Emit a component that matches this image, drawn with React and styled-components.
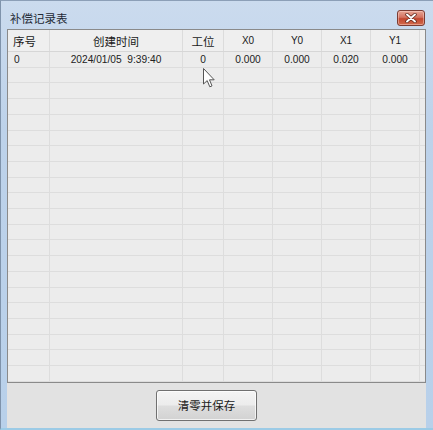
import React from 'react'
import styled, { createGlobalStyle } from 'styled-components'

const GlobalStyle = createGlobalStyle`
  html, body {
    margin: 0;
    padding: 0;
    background: #ffffff;
  }
  body {
    font-family: "Liberation Sans", "Noto Sans CJK SC", sans-serif;
  }
`

const columns = [
  { key: 'no', title: '序号', align: 'left', cjk: true },
  { key: 'time', title: '创建时间', align: 'center', cjk: true },
  { key: 'station', title: '工位', align: 'center', cjk: true },
  { key: 'x0', title: 'X0', align: 'center' },
  { key: 'y0', title: 'Y0', align: 'center' },
  { key: 'x1', title: 'X1', align: 'center' },
  { key: 'y1', title: 'Y1', align: 'center' },
]

const records = [
  { no: '0', time: '2024/01/05  9:39:40', station: '0', x0: '0.000', y0: '0.000', x1: '0.020', y1: '0.000' },
]

const EMPTY_ROWS = 20

export default function App() {
  const blank = Array.from({ length: EMPTY_ROWS })

  return (
    <>
      <GlobalStyle />
      <Window>
        <TitleBar>
          <Title>补偿记录表</Title>
          <CloseButton>
            <svg width="12" height="10" viewBox="0 0 12 10">
              <path d="M2 1.5 L10 8.5 M10 1.5 L2 8.5" stroke="#5a2318" strokeWidth="3.4" strokeLinecap="round" />
              <path d="M2 1.5 L10 8.5 M10 1.5 L2 8.5" stroke="#ffffff" strokeWidth="1.9" strokeLinecap="round" />
            </svg>
          </CloseButton>
        </TitleBar>
        <Client>
          <Grid>
            <HeaderRow>
              {columns.map((c) => (
                <HeaderCell key={c.key} $align={c.align} $cjk={c.cjk}>
                  {c.title}
                </HeaderCell>
              ))}
              <HeaderCell />
            </HeaderRow>
            {records.map((r) => (
              <Row key={r.no}>
                {columns.map((c) => (
                  <Cell key={c.key} $align={c.align}>
                    {r[c.key]}
                  </Cell>
                ))}
                <Cell />
              </Row>
            ))}
            {blank.map((_, i) => (
              <Row key={'e' + i}>
                {columns.map((c) => (
                  <Cell key={c.key} />
                ))}
                <Cell />
              </Row>
            ))}
            <Pointer width="12" height="20" viewBox="0 0 12 20">
              <path
                d="M0.5 0.5 L0.5 16 L4.2 12.6 L6.8 18.8 L9 17.9 L6.5 11.8 L11.2 11.8 Z"
                fill="#ffffff"
                stroke="#555555"
                strokeWidth="1"
                strokeLinejoin="round"
              />
            </Pointer>
          </Grid>
          <Footer>
            <PushButton>清零并保存</PushButton>
          </Footer>
        </Client>
      </Window>
    </>
  )
}

const Window = styled.div`
  width: 433px;
  height: 430px;
  box-sizing: border-box;
  display: flex;
  flex-direction: column;
  background: linear-gradient(180deg, #cbdbee 0%, #bdd2ea 30%, #b8d0ea 100%);
  border-left: 1px solid #7f93ab;
  border-top: 1px solid #8c9fb7;
  border-bottom: 2px solid #9ccbe6;
`

const TitleBar = styled.div`
  height: 28px;
  display: flex;
  align-items: center;
  justify-content: space-between;
  padding: 0 8px 0 9px;
  box-sizing: border-box;
`

const Title = styled.span`
  font-family: "Noto Sans CJK SC", sans-serif;
  font-size: 11.5px;
  color: #1f2a36;
  margin-top: 5px;
`

const CloseButton = styled.div`
  width: 28px;
  height: 16px;
  margin-top: 6px;
  box-sizing: border-box;
  display: flex;
  align-items: center;
  justify-content: center;
  border: 1px solid #7c3c32;
  border-radius: 3px;
  background: linear-gradient(180deg, #e7a594 0%, #d47260 45%, #c2472f 55%, #d26a4c 100%);
  box-shadow: inset 0 0 0 1px rgba(255, 220, 210, 0.45);
`

const Client = styled.div`
  flex: 1;
  margin: 0 7px 0 6px;
  display: flex;
  flex-direction: column;
  background: #e2e2e2;
`

const Grid = styled.div`
  position: relative;
  height: 354px;
  box-sizing: border-box;
  border: 1px solid #8a8a8a;
  background: #ececec;
  overflow: hidden;
`

const track = '42px 133px 41px 49px 49px 49px 49px 1fr'

const HeaderRow = styled.div`
  display: grid;
  grid-template-columns: ${track};
  height: 22px;
  box-sizing: border-box;
  border-bottom: 1px solid #d6d6d6;
  background: #efefef;
`

const HeaderCell = styled.div`
  display: flex;
  align-items: center;
  justify-content: ${(p) => (p.$align === 'left' ? 'flex-start' : 'center')};
  padding-left: ${(p) => (p.$align === 'left' ? '5px' : '0')};
  border-right: 1px solid #dcdcdc;
  font-family: ${(p) => (p.$cjk ? '"Noto Sans CJK SC", sans-serif' : '"Liberation Sans", sans-serif')};
  font-size: ${(p) => (p.$cjk ? '11.5px' : '10px')};
  color: #1a1a1a;
  &:last-child {
    border-right: none;
  }
`

const Row = styled.div`
  display: grid;
  grid-template-columns: ${track};
  height: calc(330px / 21);
  box-sizing: border-box;
  border-bottom: 1px solid #dddddd;
`

const Cell = styled.div`
  display: flex;
  align-items: center;
  justify-content: ${(p) => (p.$align === 'left' ? 'flex-start' : 'center')};
  padding-left: ${(p) => (p.$align === 'left' ? '6px' : '0')};
  padding-top: 1px;
  border-right: 1px solid #dddddd;
  font-family: "Liberation Sans", sans-serif;
  font-size: 10.2px;
  color: #222222;
  white-space: pre;
  &:last-child {
    border-right: none;
  }
`

const Pointer = styled.svg`
  position: absolute;
  left: 195px;
  top: 38px;
`

const Footer = styled.div`
  flex: 1;
  display: flex;
  align-items: center;
  padding-left: 149px;
  padding-bottom: 1px;
`

const PushButton = styled.button`
  width: 101px;
  height: 31px;
  padding: 0;
  border: 1px solid #707070;
  border-radius: 3px;
  background: linear-gradient(180deg, #f4f4f4 0%, #ececec 48%, #dedede 52%, #d2d2d2 100%);
  box-shadow: inset 0 0 0 1px rgba(255, 255, 255, 0.7);
  font-family: "Noto Sans CJK SC", sans-serif;
  font-size: 11.5px;
  color: #1a1a1a;
`
